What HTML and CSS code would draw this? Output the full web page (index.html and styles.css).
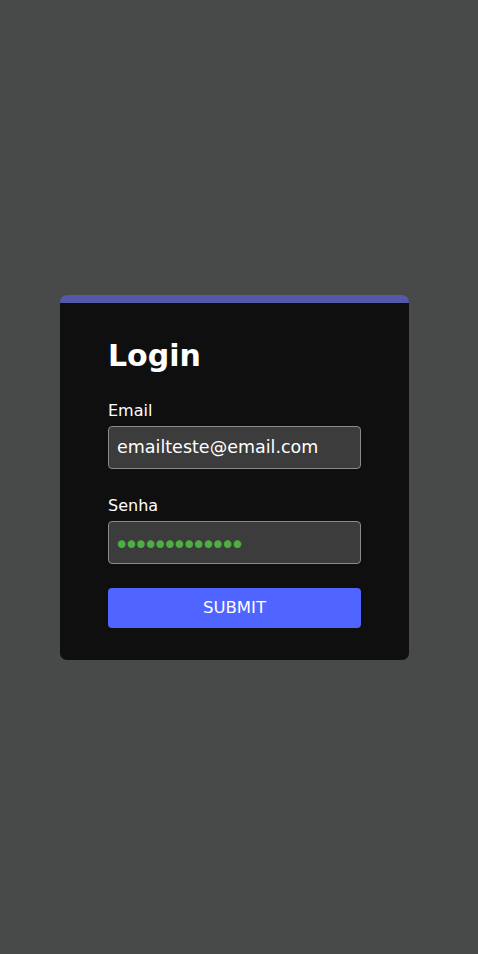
FILE: index.html
```html
<!DOCTYPE html>
<html lang="pt">
<head>
<meta charset="utf-8">
<title>Login</title>
<link rel="stylesheet" href="styles.css">
</head>
<body>
<main class="page">
  <form class="card">
    <h1 class="title">Login</h1>
    <label class="field">
      <span class="label">Email</span>
      <input class="input" type="email" value="emailteste@email.com">
    </label>
    <label class="field">
      <span class="label">Senha</span>
      <input class="input input-pass" type="password" value="1234567890123">
    </label>
    <button class="submit" type="button">SUBMIT</button>
  </form>
</main>
</body>
</html>
```
FILE: styles.css
```css
html, body {
  margin: 0;
  height: 100%;
}
body {
  background: #484a49;
  font-family: "DejaVu Sans", Verdana, sans-serif;
  color: #fff;
}
.page {
  height: 100%;
  display: flex;
  align-items: center;
  justify-content: center;
  padding-right: 9px;
  box-sizing: border-box;
}
.card {
  width: 349px;
  box-sizing: border-box;
  background: #0f0f0f;
  border-top: 8px solid #5459a8;
  border-radius: 7px;
  padding: 33px 48px 32px;
  display: flex;
  flex-direction: column;
}
.title {
  margin: 0 0 25px;
  font-size: 30px;
  font-weight: bold;
  line-height: 40px;
}
.field {
  display: flex;
  flex-direction: column;
  gap: 6px;
}
.field + .field {
  margin-top: 27px;
}
.label {
  font-size: 16px;
  line-height: 19px;
}
.input {
  height: 43px;
  box-sizing: border-box;
  background: #3c3c3c;
  border: 1px solid #8a8a8a;
  border-radius: 4px;
  padding: 0 8px;
  color: #fff;
  font-family: "DejaVu Sans", Verdana, sans-serif;
  font-size: 17.5px;
  outline: none;
}
.input-pass {
  color: #4caf3f;
  font-size: 26px;
  letter-spacing: -5.7px;
  padding: 5px 8px 0 5px;
}
.submit {
  margin-top: 24px;
  height: 40px;
  border: none;
  border-radius: 4px;
  background: #5064ff;
  color: #fff;
  font-family: "DejaVu Sans", Verdana, sans-serif;
  font-size: 16.5px;
}
```
